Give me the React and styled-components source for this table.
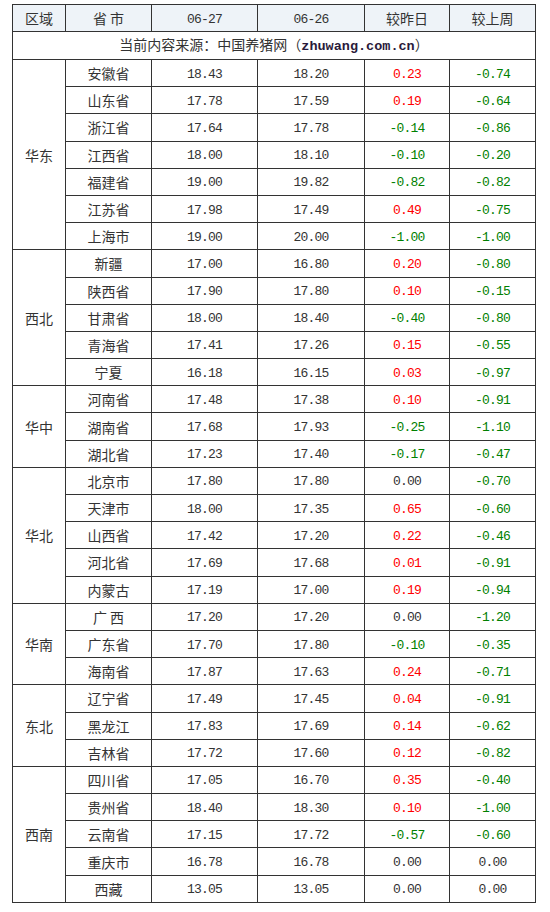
import React from "react";
import styled, { createGlobalStyle } from "styled-components";

const GlobalStyle = createGlobalStyle`
    html, body {
        margin: 0;
        padding: 0;
        background: #fff;
    }
    body {
        font-family: "Noto Sans CJK SC", "Liberation Sans", sans-serif;
        color: #333;
    }
`

const colWidths = [53, 86, 106, 107, 85, 86]

const regions = [
    ["华东", [
        ["安徽省", "18.43", "18.20", "0.23", "-0.74"],
        ["山东省", "17.78", "17.59", "0.19", "-0.64"],
        ["浙江省", "17.64", "17.78", "-0.14", "-0.86"],
        ["江西省", "18.00", "18.10", "-0.10", "-0.20"],
        ["福建省", "19.00", "19.82", "-0.82", "-0.82"],
        ["江苏省", "17.98", "17.49", "0.49", "-0.75"],
        ["上海市", "19.00", "20.00", "-1.00", "-1.00"],
    ]],
    ["西北", [
        ["新疆", "17.00", "16.80", "0.20", "-0.80"],
        ["陕西省", "17.90", "17.80", "0.10", "-0.15"],
        ["甘肃省", "18.00", "18.40", "-0.40", "-0.80"],
        ["青海省", "17.41", "17.26", "0.15", "-0.55"],
        ["宁夏", "16.18", "16.15", "0.03", "-0.97"],
    ]],
    ["华中", [
        ["河南省", "17.48", "17.38", "0.10", "-0.91"],
        ["湖南省", "17.68", "17.93", "-0.25", "-1.10"],
        ["湖北省", "17.23", "17.40", "-0.17", "-0.47"],
    ]],
    ["华北", [
        ["北京市", "17.80", "17.80", "0.00", "-0.70"],
        ["天津市", "18.00", "17.35", "0.65", "-0.60"],
        ["山西省", "17.42", "17.20", "0.22", "-0.46"],
        ["河北省", "17.69", "17.68", "0.01", "-0.91"],
        ["内蒙古", "17.19", "17.00", "0.19", "-0.94"],
    ]],
    ["华南", [
        ["广 西", "17.20", "17.20", "0.00", "-1.20"],
        ["广东省", "17.70", "17.80", "-0.10", "-0.35"],
        ["海南省", "17.87", "17.63", "0.24", "-0.71"],
    ]],
    ["东北", [
        ["辽宁省", "17.49", "17.45", "0.04", "-0.91"],
        ["黑龙江", "17.83", "17.69", "0.14", "-0.62"],
        ["吉林省", "17.72", "17.60", "0.12", "-0.82"],
    ]],
    ["西南", [
        ["四川省", "17.05", "16.70", "0.35", "-0.40"],
        ["贵州省", "18.40", "18.30", "0.10", "-1.00"],
        ["云南省", "17.15", "17.72", "-0.57", "-0.60"],
        ["重庆市", "16.78", "16.78", "0.00", "0.00"],
        ["西藏", "13.05", "13.05", "0.00", "0.00"],
    ]],
]

const Table = styled.table`
    margin: 4px 0 0 12px;
    width: 523px;
    border-collapse: collapse;
    table-layout: fixed;

    th, td {
        border: 1px solid #333;
        text-align: center;
        padding: 0;
        font-weight: normal;
        font-size: 14px;
        line-height: 16px;
    }
`

const Col = styled.col`
    width: ${p => p.$w}px;
`

const HeadRow = styled.tr`
    height: 27px;
    background: #eef3f8;
`

const SourceRow = styled.tr`
    height: 28px;
`

const DataRow = styled.tr`
    height: 27.2px;
`

const Num = styled.span`
    font-family: "Liberation Mono", "DejaVu Sans Mono", monospace;
    font-size: 13px;
    letter-spacing: -0.8px;
    color: ${p => p.$tone === "up" ? "#ff0000" : p.$tone === "down" ? "#008000" : "#333"};
`

const Site = styled.b`
    font-family: "Liberation Mono", monospace;
    font-size: 13.5px;
    color: #2a1a3a;
`

const tone = v => {
    const n = parseFloat(v)
    if (n > 0) return "up"
    if (n < 0) return "down"
    return "flat"
}

const App = () => {
    return (
        <>
            <GlobalStyle />
            <Table>
                <colgroup>
                    {colWidths.map((w, i) => <Col key={i} $w={w} />)}
                </colgroup>
                <thead>
                    <HeadRow>
                        <th>区域</th>
                        <th>省 市</th>
                        <th><Num>06-27</Num></th>
                        <th><Num>06-26</Num></th>
                        <th>较昨日</th>
                        <th>较上周</th>
                    </HeadRow>
                </thead>
                <tbody>
                    <SourceRow>
                        <td colSpan={6}>
                            当前内容来源：中国养猪网（<Site>zhuwang.com.cn</Site>）
                        </td>
                    </SourceRow>
                    {regions.map(([name, rows]) =>
                        rows.map((r, i) => (
                            <DataRow key={name + r[0]}>
                                {i === 0 && <td rowSpan={rows.length}>{name}</td>}
                                <td>{r[0]}</td>
                                <td><Num>{r[1]}</Num></td>
                                <td><Num>{r[2]}</Num></td>
                                <td><Num $tone={tone(r[3])}>{r[3]}</Num></td>
                                <td><Num $tone={tone(r[4])}>{r[4]}</Num></td>
                            </DataRow>
                        ))
                    )}
                </tbody>
            </Table>
        </>
    )
}

export default App
